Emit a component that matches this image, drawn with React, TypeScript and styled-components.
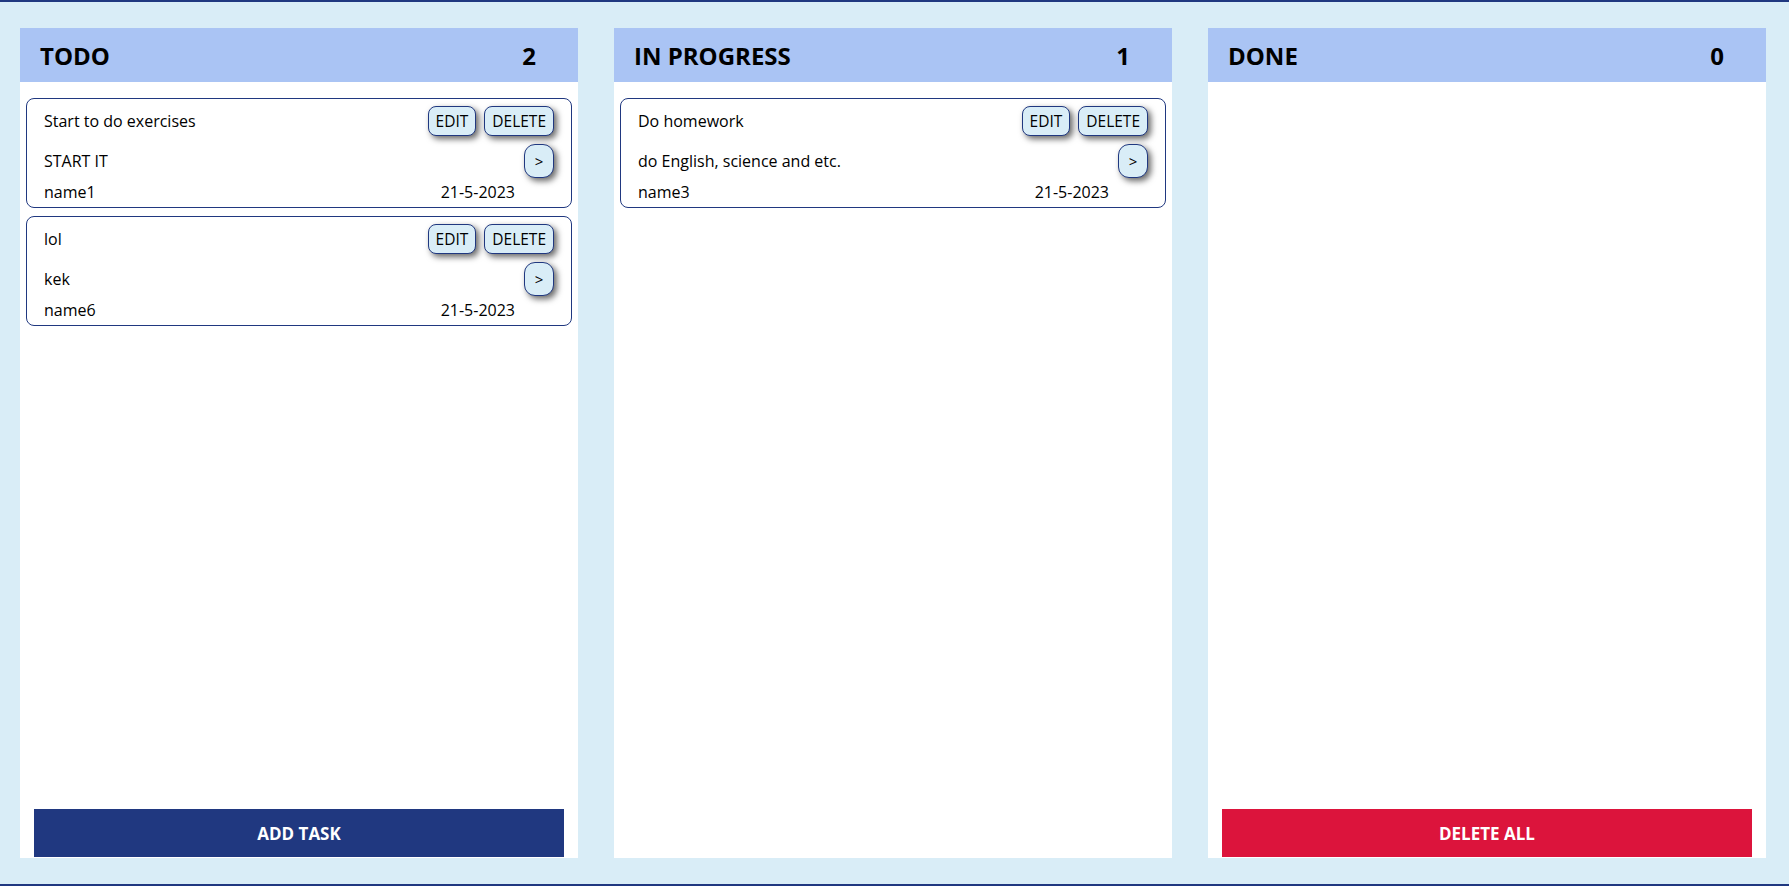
import React from "react";
import styled, { createGlobalStyle } from "styled-components";

type Task = {
  id: number;
  title: string;
  description: string;
  user: string;
  date: string;
};

type Column = {
  title: string;
  tasks: Task[];
  action?: "add" | "clear";
};

const columns: Column[] = [
  {
    title: "TODO",
    action: "add",
    tasks: [
      { id: 1, title: "Start to do exercises", description: "START IT", user: "name1", date: "21-5-2023" },
      { id: 6, title: "lol", description: "kek", user: "name6", date: "21-5-2023" },
    ],
  },
  {
    title: "IN PROGRESS",
    tasks: [
      { id: 3, title: "Do homework", description: "do English, science and etc.", user: "name3", date: "21-5-2023" },
    ],
  },
  { title: "DONE", action: "clear", tasks: [] },
];

const App = () => {
  return (
    <>
      <GlobalStyle />
      <StyledBoard>
        {columns.map((column) => (
          <StyledColumn key={column.title}>
            <StyledColumnHeader>
              <span>{column.title}</span>
              <span>{column.tasks.length}</span>
            </StyledColumnHeader>
            <StyledTaskList>
              {column.tasks.map((task) => (
                <StyledCard key={task.id}>
                  <StyledCardRow>
                    <span>{task.title}</span>
                    <StyledActions>
                      <StyledSmallButton>EDIT</StyledSmallButton>
                      <StyledSmallButton>DELETE</StyledSmallButton>
                    </StyledActions>
                  </StyledCardRow>
                  <StyledDescriptionRow>
                    <span>{task.description}</span>
                    <StyledMoveButton>&gt;</StyledMoveButton>
                  </StyledDescriptionRow>
                  <StyledFooterRow>
                    <span>{task.user}</span>
                    <span>{task.date}</span>
                  </StyledFooterRow>
                </StyledCard>
              ))}
            </StyledTaskList>
            {column.action && (
              <StyledWideButton $danger={column.action === "clear"}>
                {column.action === "add" ? "ADD TASK" : "DELETE ALL"}
              </StyledWideButton>
            )}
          </StyledColumn>
        ))}
      </StyledBoard>
    </>
  );
};

const GlobalStyle = createGlobalStyle`
  body {
    margin: 0;
    font-family: "Open Sans", "Noto Sans", sans-serif;
    background-color: #d9edf7;
    color: #000;
  }
`;

const StyledBoard = styled.div`
  box-sizing: border-box;
  height: 886px;
  display: flex;
  gap: 36px;
  padding: 26px 0 26px 20px;
  border-top: 2px solid #203880;
  border-bottom: 2px solid #203880;
  background-color: #d9edf7;
`;

const StyledColumn = styled.div`
  width: 558px;
  display: flex;
  flex-direction: column;
  background-color: #fff;
`;

const StyledColumnHeader = styled.div`
  height: 54px;
  flex-shrink: 0;
  display: flex;
  justify-content: space-between;
  align-items: center;
  padding: 0 42px 0 20px;
  background-color: #aac4f4;
  font-size: 24px;
  font-weight: 700;
`;

const StyledTaskList = styled.div`
  flex: 1;
  display: flex;
  flex-direction: column;
  gap: 8px;
  padding: 16px 6px;
`;

const StyledCard = styled.div`
  border: 1px solid #203880;
  border-radius: 8px;
  padding: 7px 17px 3px;
  font-size: 16px;
`;

const StyledCardRow = styled.div`
  display: flex;
  justify-content: space-between;
  align-items: center;
  height: 30px;
`;

const StyledDescriptionRow = styled(StyledCardRow)`
  height: 34px;
  margin-top: 8px;
`;

const StyledFooterRow = styled.div`
  display: flex;
  justify-content: space-between;
  line-height: 24px;
  margin-top: 2px;
  padding-right: 39px;
`;

const StyledActions = styled.div`
  display: flex;
  gap: 8px;
`;

const StyledSmallButton = styled.button`
  height: 30px;
  padding: 0 7px;
  border: 1px solid #203880;
  border-radius: 8px;
  background-color: #d9edf7;
  box-shadow: 3px 3px 6px rgba(0, 0, 0, 0.6);
  font-family: inherit;
  font-size: 15.5px;
  color: #000;
  cursor: pointer;
`;

const StyledMoveButton = styled(StyledSmallButton)`
  width: 30px;
  height: 34px;
  padding: 0;
  border-radius: 11px;
  font-size: 15px;
`;

const StyledWideButton = styled.button<{ $danger?: boolean }>`
  height: 48px;
  margin: 0 14px 1px;
  border: none;
  background-color: ${(p) => (p.$danger ? "#dc143c" : "#203880")};
  color: #fff;
  font-family: inherit;
  font-size: 17px;
  font-weight: 700;
  cursor: pointer;
`;

export default App;
